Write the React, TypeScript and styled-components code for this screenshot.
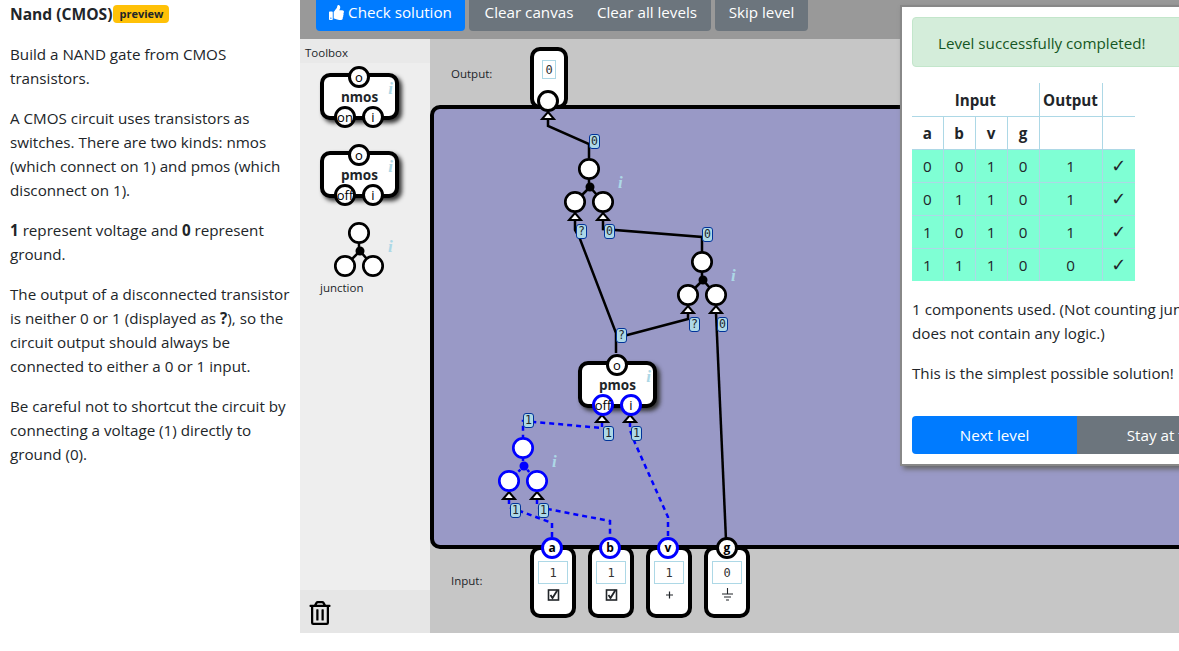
import * as React from 'react'
import styled, { createGlobalStyle } from 'styled-components'
import { FaRegTrashAlt, FaThumbsUp } from 'react-icons/fa'

const BLUE = '#0000ff'
const BLACK = '#000000'

// the diagram data below is in page coordinates, the canvas starts here
const CANVAS_X = 430
const CANVAS_Y = 39

const GlobalStyle = createGlobalStyle`
  html, body {
    margin: 0;
    height: 100%;
    overflow: hidden;
    background: #fff;
  }
  body {
    color: #212529;
    font: 15.2px/24px 'Open Sans', sans-serif;
  }
`

const Page = styled.div`
  display: flex;
  width: 1179px;
  height: 633px;
`

const Sidebar = styled.aside`
  width: 300px;
  flex: none;
  box-sizing: border-box;
  padding: 2px 8px 0 10px;

  p {
    margin: 0 0 16px;
  }
`

const Title = styled.h1`
  display: flex;
  align-items: center;
  margin: 0 0 16px;
  font-size: 15.6px;
  line-height: 24px;
  font-weight: 700;
`

const Badge = styled.span`
  width: 56px;
  height: 18px;
  margin-left: 1px;
  background: #ffc107;
  border-radius: 4px;
  font-size: 11px;
  line-height: 18px;
  font-weight: 700;
  text-align: center;
`

const Main = styled.main`
  position: relative;
  flex: 1;
  min-width: 0;
  display: flex;
  flex-direction: column;
`

const Toolbar = styled.div`
  height: 39px;
  flex: none;
  box-sizing: border-box;
  padding: 0 0 8px 16px;
  display: flex;
  align-items: flex-end;
  gap: 4px;
  background: #999999;
`

const Button = styled.button<{ $width: number; $primary?: boolean }>`
  width: ${(p) => p.$width}px;
  height: 38px;
  flex: none;
  display: inline-flex;
  align-items: center;
  justify-content: center;
  gap: 4px;
  padding: 0;
  border: 0;
  border-radius: 4px;
  background: ${(p) => (p.$primary ? '#007bff' : '#6c757d')};
  color: #fff;
  font: 15.2px/24px 'Open Sans', sans-serif;
`

const ButtonGroup = styled.div`
  display: flex;

  ${Button}:first-child {
    border-radius: 4px 0 0 4px;
  }
  ${Button}:last-child {
    border-radius: 0 4px 4px 0;
    padding-right: 6px;
  }
`

const Workspace = styled.div`
  flex: 1;
  min-height: 0;
  display: flex;
`

const Toolbox = styled.div`
  width: 130px;
  flex: none;
  display: flex;
  flex-direction: column;
  background: #eeeeee;
`

const ToolboxHeader = styled.div`
  height: 24px;
  padding-left: 5px;
  background: #e9e9e9;
  font-size: 11.5px;
  line-height: 28px;
`

const Palette = styled.div`
  flex: 1;
  display: flex;
  flex-direction: column;
  align-items: flex-start;
  gap: 31px;
  padding: 10px 0 0 20px;
`

const TrashZone = styled.div`
  height: 43px;
  padding: 11px 0 0 8px;
  box-sizing: border-box;
  background: #e6e6e6;
  color: #000;
  font-size: 24px;
  line-height: 0;
`

const Canvas = styled.div`
  position: relative;
  flex: 1;
  overflow: hidden;
  background: #c6c6c6;
`

const Board = styled.div`
  position: absolute;
  left: 0;
  top: ${105 - CANVAS_Y}px;
  width: 900px;
  height: 444px;
  box-sizing: border-box;
  background: #9999c6;
  border: 4px solid #000;
  border-radius: 10px;
`

const CanvasLabel = styled.span<{ $y: number }>`
  position: absolute;
  left: 21px;
  top: ${(p) => p.$y - CANVAS_Y}px;
  font-size: 11.5px;
  line-height: 16px;
`

const WireLayer = styled.svg`
  position: absolute;
  left: 0;
  top: 0;
  width: 749px;
  height: 594px;
`

const Port = styled.div<{ $live?: boolean }>`
  position: absolute;
  width: 22px;
  height: 22px;
  box-sizing: border-box;
  display: flex;
  align-items: center;
  justify-content: center;
  background: #fff;
  border: 3px solid ${(p) => (p.$live ? BLUE : BLACK)};
  border-radius: 50%;
  color: #000;
  font-size: 13px;
  line-height: 1;
  white-space: nowrap;
`

const GateBox = styled.div`
  position: relative;
  width: 79px;
  height: 47px;
  box-sizing: border-box;
  display: flex;
  align-items: center;
  justify-content: center;
  background: #fff;
  border: 4px solid #000;
  border-radius: 10px;
  box-shadow: 3px 3px 4px #333;
  font-size: 13.5px;
  font-weight: 700;
`

const GatePort = styled(Port)<{ $slot: 'out' | 'left' | 'right' }>`
  left: ${(p) => ({ out: 24, left: 10, right: 38 })[p.$slot]}px;
  top: ${(p) => (p.$slot === 'out' ? -11 : 29)}px;
  font-weight: 400;
`

const InfoMark = styled.span`
  color: #add8e6;
  font: italic 700 17px/1 'Liberation Serif', serif;
`

const GateInfo = styled(InfoMark)`
  position: absolute;
  right: 2px;
  top: 3px;
`

const JunctionInfo = styled(InfoMark)`
  position: absolute;
  left: 55px;
  top: 17px;
`

const Placed = styled.div<{ $x: number; $y: number }>`
  position: absolute;
  left: ${(p) => p.$x - CANVAS_X}px;
  top: ${(p) => p.$y - CANVAS_Y}px;
`

const JunctionBox = styled.div`
  position: relative;
  width: 52px;
  height: 60px;
`

const JunctionSvg = styled.svg`
  display: block;
  width: 52px;
  height: 60px;
`

const JunctionSlot = styled.div`
  margin: -8px 0 0 13px;
`

const JunctionLabel = styled.div`
  margin-top: -1px;
  font-size: 11.5px;
  line-height: 16px;
`

const WireTag = styled(Placed)`
  width: 11px;
  height: 15px;
  box-sizing: border-box;
  display: flex;
  align-items: center;
  justify-content: center;
  background: #add8e6;
  border: 1px solid #003399;
  border-radius: 3px;
  color: #212529;
  font: 11.5px/1 'DejaVu Sans Mono', monospace;
`

const Terminal = styled(Placed)<{ $w: number; $h: number }>`
  width: ${(p) => p.$w}px;
  height: ${(p) => p.$h}px;
  box-sizing: border-box;
  display: flex;
  flex-direction: column;
  align-items: center;
  background: #fff;
  border: 4px solid #000;
  border-radius: 10px;
`

const InputTerminal = styled(Terminal)`
  padding-top: 11px;
  gap: 2px;
`

const OutputTerminal = styled(Terminal)`
  padding-top: 9px;
`

const ValueBox = styled.div<{ $wide?: boolean }>`
  width: ${(p) => (p.$wide ? 30 : 14)}px;
  height: ${(p) => (p.$wide ? 23 : 19)}px;
  box-sizing: border-box;
  display: flex;
  align-items: center;
  justify-content: center;
  border: 1px solid #add8e6;
  font: 12px/1 'DejaVu Sans Mono', monospace;
  color: #333;
`

const TerminalPort = styled(Port)<{ $cx: number }>`
  left: ${(p) => p.$cx - 11}px;
  top: -13px;
  font-size: 12px;
  font-weight: 700;
`

const OutputPort = styled(Port)`
  left: ${537 - CANVAS_X}px;
  top: ${90 - CANVAS_Y}px;
`

const KindIcon = styled.svg`
  display: block;
  width: 13px;
  height: 13px;
  margin-top: 2px;
`

const Dialog = styled.section`
  position: absolute;
  left: 600px;
  top: 5px;
  width: 400px;
  box-sizing: border-box;
  padding: 10px;
  background: #fff;
  border: 2px solid #888;
  box-shadow: 3px 3px 5px #666;
`

const Alert = styled.div`
  height: 50px;
  box-sizing: border-box;
  padding: 13px 25px 0;
  background: #d4edda;
  border: 1px solid #c3e6cb;
  border-radius: 4px;
  color: #155724;
`

const TruthTable = styled.table`
  margin: 16px 0;
  border-collapse: collapse;
  table-layout: fixed;
  width: 223px;
  height: 197px;
`

const TableRow = styled.tr<{ $pass?: boolean }>`
  height: 33px;
  background: ${(p) => (p.$pass ? '#7fffd4' : 'transparent')};
`

const HeadCell = styled.th`
  padding: 0;
  border: 1px solid #add8e6;
  font-weight: 700;
  text-align: center;

  &:first-child {
    border-left: 0;
  }
  &:last-child {
    border-right: 0;
  }
  tr:first-child > & {
    border-top: 0;
    padding-top: 2px;
  }
`

const ValueCell = styled.td`
  padding: 0;
  border: 1px solid #add8e6;
  text-align: center;

  &:first-child {
    border-left: 0;
  }
  &:last-child {
    border-right: 0;
    font: 700 18px/1 'DejaVu Sans', sans-serif;
    color: #212529;
  }
  tr:last-child > & {
    border-bottom: 0;
  }
`

const DialogText = styled.p`
  margin: 0 0 16px;
  white-space: nowrap;
`

const DialogActions = styled.div`
  display: flex;
  margin-top: 31px;

  ${Button}:first-child {
    border-radius: 4px 0 0 4px;
  }
  ${Button}:last-child {
    border-radius: 0 4px 4px 0;
  }
`

const Junction = ({ live }: { live?: boolean }) => {
  const c = live ? BLUE : BLACK
  return (
    <JunctionBox>
      <JunctionSvg viewBox='-26 -12 52 60'>
        <path
          d='M0 0V18M1 18L-14 33M1 18L14 33'
          stroke={c}
          strokeWidth='2.5'
          strokeDasharray={live ? '3 2' : undefined}
        />
        <circle cx='1' cy='18' r='4.5' fill={c} />
        {[
          [0, 0],
          [-14, 33],
          [14, 33]
        ].map(([x, y]) => (
          <circle
            key={x}
            cx={x}
            cy={y}
            r='9.7'
            fill='#fff'
            stroke={c}
            strokeWidth='2.7'
          />
        ))}
      </JunctionSvg>
      <JunctionInfo>i</JunctionInfo>
    </JunctionBox>
  )
}

interface GateProps {
  name: string
  enable: string
  live?: boolean
}

const Gate = ({ name, enable, live }: GateProps) => (
  <GateBox>
    <GatePort $slot='out'>o</GatePort>
    {name}
    <GateInfo>i</GateInfo>
    <GatePort $slot='left' $live={live}>
      {enable}
    </GatePort>
    <GatePort $slot='right' $live={live}>
      i
    </GatePort>
  </GateBox>
)

const CheckedIcon = () => (
  <KindIcon viewBox='0 0 13 13'>
    <rect x='1.5' y='2' width='10' height='10' fill='none' stroke='#212529' strokeWidth='1.6' />
    <path d='M3.5 7l2 3 5-8' fill='none' stroke='#212529' strokeWidth='1.8' />
  </KindIcon>
)

const PlusIcon = () => (
  <KindIcon viewBox='0 0 13 13'>
    <path d='M3 7h7M6.5 3.5v7' stroke='#212529' strokeWidth='1.2' />
  </KindIcon>
)

const GroundIcon = () => (
  <KindIcon viewBox='0 0 13 13'>
    <path d='M6.5 0v6M1 6h11M3 9h7M5 12h3' stroke='#212529' strokeWidth='1.1' />
  </KindIcon>
)

const blackWires = [
  'M548 118V126L589 144V158',
  'M575 220V230L580 239L616 333V353',
  'M603 220V229L702 237V252',
  'M688 313V319L616 338',
  'M716 313L726 540'
]

const blueWires = [
  'M602 422V428L523 421V438',
  'M630 422V430L635 443L668 517V538',
  'M509 499V507L552 523V540',
  'M537 499V507L610 521V540'
]

const arrows: [number, number][] = [
  [548, 112],
  [575, 213],
  [603, 213],
  [688, 306],
  [716, 306],
  [602, 415],
  [630, 415],
  [509, 492],
  [537, 492]
]

const tags: [number, number, string][] = [
  [594, 142, '0'],
  [581, 232, '?'],
  [609, 232, '0'],
  [707, 235, '0'],
  [694, 325, '?'],
  [722, 325, '0'],
  [621, 336, '?'],
  [528, 421, '1'],
  [608, 434, '1'],
  [636, 434, '1'],
  [515, 511, '1'],
  [543, 511, '1']
]

const junctions: [number, number, boolean][] = [
  [589, 169, false],
  [702, 262, false],
  [523, 448, true]
]

const inputs = [
  { port: 'a', x: 530, cx: 18, value: '1', live: true, icon: <CheckedIcon /> },
  { port: 'b', x: 588, cx: 18, value: '1', live: true, icon: <CheckedIcon /> },
  { port: 'v', x: 646, cx: 18, value: '1', live: true, icon: <PlusIcon /> },
  { port: 'g', x: 704, cx: 19, value: '0', live: false, icon: <GroundIcon /> }
]

const headers = ['a', 'b', 'v', 'g']

const rows = [
  ['0', '0', '1', '0', '1'],
  ['0', '1', '1', '0', '1'],
  ['1', '0', '1', '0', '1'],
  ['1', '1', '1', '0', '0']
]

export default function App() {
  return (
    <Page>
      <GlobalStyle />
      <Sidebar>
        <Title>
          Nand (CMOS)<Badge>preview</Badge>
        </Title>
        <p>Build a NAND gate from CMOS transistors.</p>
        <p>
          A CMOS circuit uses transistors as switches. There are two kinds: nmos
          (which connect on 1) and pmos (which disconnect on 1).
        </p>
        <p>
          <b>1</b> represent voltage and <b>0</b> represent ground.
        </p>
        <p>
          The output of a disconnected transistor is neither 0 or 1 (displayed
          as <b>?</b>), so the circuit output should always be connected to
          either a 0 or 1 input.
        </p>
        <p>
          Be careful not to shortcut the circuit by connecting a voltage (1)
          directly to ground (0).
        </p>
      </Sidebar>
      <Main>
        <Toolbar>
          <Button $primary $width={149}>
            <FaThumbsUp size={15} />
            Check solution
          </Button>
          <ButtonGroup>
            <Button $width={120}>Clear canvas</Button>
            <Button $width={122}>Clear all levels</Button>
          </ButtonGroup>
          <Button $width={93}>Skip level</Button>
        </Toolbar>
        <Workspace>
          <Toolbox>
            <ToolboxHeader>Toolbox</ToolboxHeader>
            <Palette>
              <Gate name='nmos' enable='on' />
              <Gate name='pmos' enable='off' />
              <div>
                <JunctionSlot>
                  <Junction />
                </JunctionSlot>
                <JunctionLabel>junction</JunctionLabel>
              </div>
            </Palette>
            <TrashZone>
              <FaRegTrashAlt />
            </TrashZone>
          </Toolbox>
          <Canvas>
            <CanvasLabel $y={66}>Output:</CanvasLabel>
            <CanvasLabel $y={573}>Input:</CanvasLabel>
            <OutputTerminal $x={530} $y={47} $w={38} $h={62}>
              <ValueBox>0</ValueBox>
            </OutputTerminal>
            <Board />
            <OutputPort />
            {inputs.map((t) => (
              <InputTerminal key={t.port} $x={t.x} $y={546} $w={46} $h={72}>
                <TerminalPort $cx={t.cx} $live={t.live}>
                  {t.port}
                </TerminalPort>
                <ValueBox $wide>{t.value}</ValueBox>
                {t.icon}
              </InputTerminal>
            ))}
            <WireLayer viewBox={`${CANVAS_X} ${CANVAS_Y} 749 594`}>
              <g fill='none' stroke={BLACK} strokeWidth='2.5'>
                {blackWires.map((d) => (
                  <path key={d} d={d} />
                ))}
              </g>
              <g fill='none' stroke={BLUE} strokeWidth='2.5' strokeDasharray='5 4'>
                {blueWires.map((d) => (
                  <path key={d} d={d} />
                ))}
              </g>
              {arrows.map(([x, y]) => (
                <path
                  key={x}
                  d={`M${x} ${y}l6 7h-12z`}
                  fill='#fff'
                  stroke={BLACK}
                  strokeWidth='2'
                />
              ))}
            </WireLayer>
            {junctions.map(([x, y, live]) => (
              <Placed key={x} $x={x - 26} $y={y - 12}>
                <Junction live={live} />
              </Placed>
            ))}
            <Placed $x={578} $y={361}>
              <Gate name='pmos' enable='off' live />
            </Placed>
            {tags.map(([x, y, v]) => (
              <WireTag key={`${x}-${y}`} $x={x - 5} $y={y - 8}>
                {v}
              </WireTag>
            ))}
          </Canvas>
        </Workspace>
        <Dialog>
          <Alert>Level successfully completed!</Alert>
          <TruthTable>
            <colgroup>
              <col width='31' />
              <col width='32' />
              <col width='32' />
              <col width='32' />
              <col width='63' />
              <col width='33' />
            </colgroup>
            <thead>
              <TableRow>
                <HeadCell colSpan={4}>Input</HeadCell>
                <HeadCell>Output</HeadCell>
                <HeadCell />
              </TableRow>
              <TableRow>
                {headers.map((h) => (
                  <HeadCell key={h}>{h}</HeadCell>
                ))}
                <HeadCell />
                <HeadCell />
              </TableRow>
            </thead>
            <tbody>
              {rows.map((row) => (
                <TableRow $pass key={row.join('')}>
                  {row.map((v, i) => (
                    <ValueCell key={i}>{v}</ValueCell>
                  ))}
                  <ValueCell>✓</ValueCell>
                </TableRow>
              ))}
            </tbody>
          </TruthTable>
          <DialogText>
            1 components used. (Not counting junctions since it
            <br />
            does not contain any logic.)
          </DialogText>
          <DialogText>This is the simplest possible solution!</DialogText>
          <DialogActions>
            <Button $primary $width={165}>
              Next level
            </Button>
            <Button $width={213}>Stay at this level</Button>
          </DialogActions>
        </Dialog>
      </Main>
    </Page>
  )
}
